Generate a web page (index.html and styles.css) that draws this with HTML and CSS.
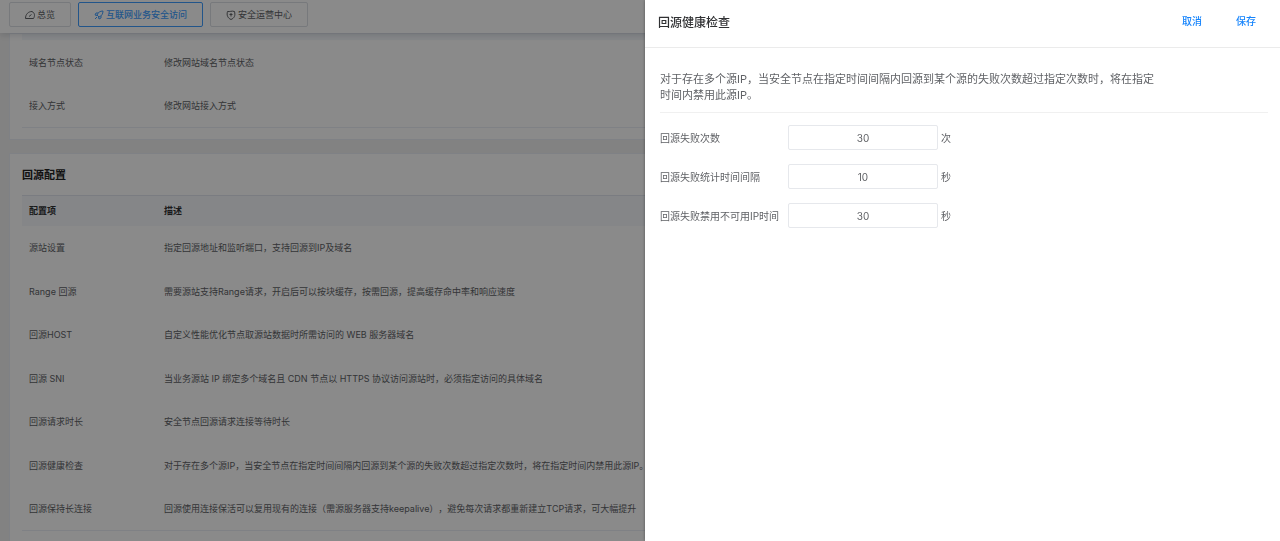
FILE: index.html
```html
<!DOCTYPE html>
<html lang="zh-CN">
<head>
  <meta charset="UTF-8">
  <title>回源健康检查</title>
  <link rel="stylesheet" href="styles.css">
</head>

<body>

<div class="page">
  <nav class="tabs">
    <a class="tab" href="#">
      <svg class="icon" viewBox="0 0 20 20"><path d="M1 17C1 8 7 3 14 3c6 3 6 9 3 14z"/><path d="M8 13l5-4"/></svg>总览
    </a>
    <a class="tab active" href="#">
      <svg class="icon" viewBox="0 0 20 20"><path d="M6 10c2-5 6-8 12-8 0 6-3 10-8 12z"/><path d="M8 6H4l-2 4 4 1M14 12v4l-4 2-1-4M2 18l4-4"/></svg>互联网业务安全访问
    </a>
    <a class="tab" href="#">
      <svg class="icon" viewBox="0 0 20 20"><path d="M3 3c5 1 8-2 14 0 2 8 0 13-7 16C3 16 1 10 3 3z"/><path d="M10 6v7M7 9h6"/></svg>安全运营中心
    </a>
  </nav>

  <main class="content">
    <section class="card site-card">
      <div class="table-head"></div>
      <table class="config-table">
        <tr>
          <td class="name">域名节点状态</td>
          <td>修改网站域名节点状态</td>
        </tr>
        <tr>
          <td>接入方式</td>
          <td>修改网站接入方式</td>
        </tr>
      </table>
    </section>

    <section class="card">
      <h3>回源配置</h3>
      <table class="config-table">
        <tr>
          <th class="name">配置项</th>
          <th>描述</th>
        </tr>
        <tr>
          <td>源站设置</td>
          <td>指定回源地址和监听端口，支持回源到IP及域名</td>
        </tr>
        <tr>
          <td>Range 回源</td>
          <td>需要源站支持Range请求，开启后可以按块缓存，按需回源，提高缓存命中率和响应速度</td>
        </tr>
        <tr>
          <td>回源HOST</td>
          <td>自定义性能优化节点取源站数据时所需访问的 WEB 服务器域名</td>
        </tr>
        <tr>
          <td>回源 SNI</td>
          <td>当业务源站 IP 绑定多个域名且 CDN 节点以 HTTPS 协议访问源站时，必须指定访问的具体域名</td>
        </tr>
        <tr>
          <td>回源请求时长</td>
          <td>安全节点回源请求连接等待时长</td>
        </tr>
        <tr>
          <td>回源健康检查</td>
          <td>对于存在多个源IP，当安全节点在指定时间间隔内回源到某个源的失败次数超过指定次数时，将在指定时间内禁用此源IP。</td>
        </tr>
        <tr>
          <td>回源保持长连接</td>
          <td>回源使用连接保活可以复用现有的连接（需源服务器支持keepalive），避免每次请求都重新建立TCP请求，可大幅提升</td>
        </tr>
      </table>
    </section>
  </main>
</div>

<div class="mask"></div>

<form class="drawer">
  <header class="drawer-header">
    <h2>回源健康检查</h2>
    <button type="button">取消</button>
    <button type="submit">保存</button>
  </header>
  <div class="drawer-body">
    <div class="intro">
      <p>对于存在多个源IP，当安全节点在指定时间间隔内回源到某个源的失败次数超过指定次数时，将在指定时间内禁用此源IP。</p>
    </div>
    <div class="field">
      <label for="failCount">回源失败次数</label>
      <input id="failCount" type="text" value="30">
      <span>次</span>
    </div>
    <div class="field">
      <label for="interval">回源失败统计时间间隔</label>
      <input id="interval" type="text" value="10">
      <span>秒</span>
    </div>
    <div class="field">
      <label for="banTime">回源失败禁用不可用IP时间</label>
      <input id="banTime" type="text" value="30">
      <span>秒</span>
    </div>
  </div>
</form>

</body>
</html>
```
FILE: styles.css
```css
* {
  box-sizing: border-box;
}

body {
  margin: 0;
  height: 100vh;
  overflow: hidden;
  font-family: Inter, "Noto Sans CJK SC", sans-serif;
  font-size: 9px;
  color: #606266;
  text-spacing-trim: space-all;
}

.page {
  height: 100vh;
  overflow: hidden;
  background: #f0f0f0;
}

.tabs {
  position: relative;
  display: flex;
  gap: 7px;
  height: 33px;
  padding: 2px 9px 0;
  background: #fff;
  box-shadow: 0 2px 6px rgba(0, 21, 41, 0.14);
}

.tab {
  display: flex;
  align-items: center;
  gap: 2px;
  height: 25px;
  padding: 0 15px;
  border: 1px solid #dcdfe6;
  border-radius: 2px;
  color: #606266;
  text-decoration: none;
}

.tab.active {
  border-color: #409eff;
  color: #409eff;
  font-weight: 500;
}

.icon {
  width: 10px;
  height: 10px;
  fill: none;
  stroke: currentColor;
  stroke-width: 2;
}

.content {
  padding: 0 9px;
}

.card {
  margin-bottom: 13px;
  padding: 0 12px 11px;
  border: 1px solid #ebeef5;
  background: #fff;
}

.card h3 {
  margin: 0;
  padding: 13px 0 11px;
  font-size: 11px;
  line-height: 17px;
  color: #222;
}

.table-head {
  height: 6px;
  background: #f5f8fc;
}

.config-table {
  width: 100%;
  border-collapse: collapse;
  border-bottom: 1px solid #ebeef5;
  white-space: nowrap;
}

.config-table th,
.config-table td {
  padding: 0 7px;
  text-align: left;
}

.config-table td {
  height: 43px;
}

.config-table tr:nth-child(odd) td {
  height: 44px;
}

.config-table th {
  height: 31px;
  border-top: 1px solid #e1e6ee;
  background: #f5f8fc;
  color: #303133;
}

.config-table .name {
  width: 135px;
}

.mask {
  position: fixed;
  inset: 0;
  background: rgba(0, 0, 0, 0.46);
}

.drawer {
  position: fixed;
  top: 0;
  right: 0;
  bottom: 0;
  width: 635px;
  background: #fff;
  box-shadow: 0 0 3px rgba(0, 0, 0, 0.4);
  font-size: 10px;
}

.drawer-header {
  display: flex;
  align-items: center;
  height: 48px;
  padding: 0 14px 4px 13px;
  border-bottom: 1px solid #ebebeb;
}

.drawer-header h2 {
  flex: 1;
  margin: 0;
  font-size: 12px;
  font-weight: 500;
  color: #303133;
}

.drawer-header button {
  margin-left: 14px;
  padding: 4px 10px 7px;
  border: none;
  background: none;
  font: inherit;
  font-weight: 500;
  color: #1684fc;
  cursor: pointer;
}

.drawer-body {
  padding: 23px 12px 0 15px;
}

.intro {
  margin-bottom: 12px;
  padding-bottom: 9px;
  border-bottom: 1px solid #f0f0f0;
  font-size: 11px;
  line-height: 16px;
}

.intro p {
  max-width: 496px;
  margin: 0;
}

.field {
  display: flex;
  align-items: center;
  gap: 3px;
  margin-bottom: 14px;
}

.field label {
  width: 125px;
  white-space: nowrap;
}

.field input {
  width: 150px;
  height: 25px;
  padding: 0;
  border: 1px solid #e6e8ec;
  border-radius: 2px;
  font: inherit;
  text-align: center;
  color: #606266;
}
```
